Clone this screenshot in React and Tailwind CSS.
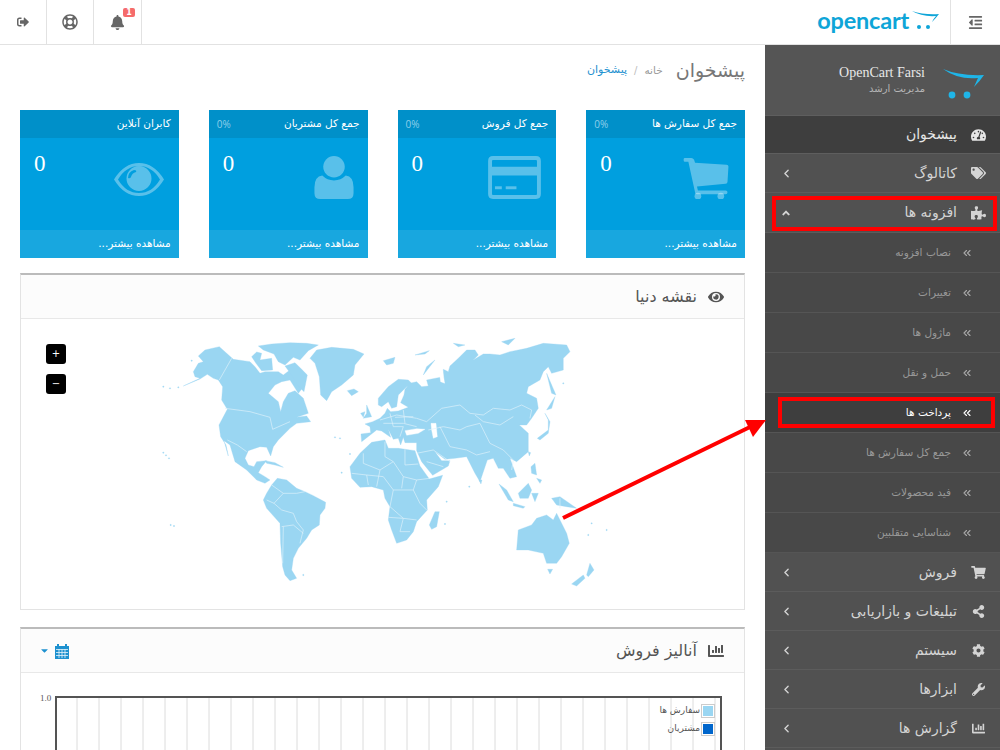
import {
  FaAngleUp,
  FaBell,
  FaCaretDown,
  FaChartBar,
  FaCog,
  FaEye,
  FaOutdent,
  FaPuzzlePiece,
  FaRegLifeRing,
  FaShareAlt,
  FaShoppingCart,
  FaSignOutAlt,
  FaTachometerAlt,
  FaTags,
  FaWrench,
} from "react-icons/fa";
import { ChevronLeft, ChevronsLeft } from "lucide-react";

const subItems = [
  "نصاب افزونه",
  "تغییرات",
  "ماژول ها",
  "حمل و نقل",
  "پرداخت ها",
  "جمع کل سفارش ها",
  "فید محصولات",
  "شناسایی متقلبین",
];

const bottomItems = [
  { label: "فروش", Icon: FaShoppingCart },
  { label: "تبلیغات و بازاریابی", Icon: FaShareAlt },
  { label: "سیستم", Icon: FaCog },
  { label: "ابزارها", Icon: FaWrench },
  { label: "گزارش ها", Icon: FaChartBar },
];

const CartGlyph = () => (
  <svg viewBox="0 0 48 44" className="w-[47px] h-[42px] fill-white/35">
    <path d="M1 1h7q2 0 3 2l1 3 33 2q2 0 2 2l-1 16q0 2-2 2l-30 3 1 4h29q2 0 2 2t-2 2H14q-2 0-2-2L5 5H1q-1 0-1-2t1-2z" />
    <circle cx="15" cy="41" r="3.500" />
    <circle cx="39" cy="41" r="3.500" />
  </svg>
);

const CardGlyph = () => (
  <svg viewBox="0 0 54 44" className="w-[53px] h-[43px] fill-white/35">
    <path
      fillRule="evenodd"
      d="M5 0h44q5 0 5 5v34q0 5-5 5H5q-5 0-5-5V5q0-5 5-5zM4 5v6h46V5q0-1-1-1H5q-1 0-1 1zm0 15v19q0 1 1 1h44q1 0 1-1V20z"
    />
    <rect x="7" y="31" width="7" height="3" />
    <rect x="18" y="31" width="11" height="3" />
  </svg>
);

const UserGlyph = () => (
  <svg viewBox="0 0 40 44" className="w-[40px] h-[43px] fill-white/35">
    <circle cx="20" cy="11" r="11" />
    <path d="M8 20q5 5 12 5t12-5q8 1 8 12v6q0 6-6 6H6q-6 0-6-6v-6q0-11 8-12z" />
  </svg>
);

const EyeGlyph = () => (
  <svg viewBox="0 0 50 33" className="w-[50px] h-[33px] fill-white/35">
    <path
      fillRule="evenodd"
      d="M25 0q15 0 25 16.500Q40 33 25 33T0 16.500Q10 0 25 0zM25 3Q12 3 4 16.500 12 30 25 30t21-13.500Q38 3 25 3z"
    />
    <path
      fillRule="evenodd"
      d="M25 3a12.500 12.500 0 1 1 0 25 12.500 12.500 0 0 1 0-25zM20 7q-6 2-6 8 2 1 3-1 1-4 5-5 1-2-2-2z"
    />
  </svg>
);

const cards = [
  { title: "جمع کل سفارش ها", pct: "0%", more: "مشاهده بیشتر...", Glyph: CartGlyph, top: "pt-[19px] pr-[15px]" },
  { title: "جمع کل فروش", pct: "0%", more: "مشاهده بیشتر...", Glyph: CardGlyph, top: "pt-[18px] pr-[15px]" },
  { title: "جمع کل مشتریان", pct: "0%", more: "مشاهده بیشتر...", Glyph: UserGlyph, top: "pt-[18px] pr-[14px]" },
  { title: "کابران آنلاین", pct: "", more: "مشاهده بیشتر...", Glyph: EyeGlyph, top: "pt-[25px] pr-[15px]" },
];

const Swoosh = ({ className }) => (
  <svg viewBox="0 0 44 32" className={className}>
    <path d="M1 1q16 7 41 6-4 6-10 12 3-7 4-9-20 2-35-9z" fill="#1fb5e8" />
    <circle cx="10" cy="27" r="3.400" fill="#1fb5e8" />
    <circle cx="25" cy="27" r="3.400" fill="#1fb5e8" />
  </svg>
);

// coastlines traced by eye, units are 1/3 px of the page
const land = [
  "100,168 150,147 172,133 190,145 205,150 218,170 215,210 232,238 215,270 207,285 212,320 228,345 235,378 222,332 240,345 255,395 290,420 320,450 345,460 360,450 345,440 325,428 335,410 350,392 320,395 312,410 295,405 285,385 295,362 330,350 350,352 362,378 370,350 385,330 420,295 440,280 482,275 470,258 440,262 475,250 460,205 435,182 415,190 400,215 392,245 385,215 355,190 375,165 395,155 420,150 445,190 465,165 440,130 420,120 400,135 385,125 345,125 330,130 315,110 300,95 250,88 208,50 165,60 145,78 160,95 145,100 130,125 135,140 150,145",
  "305,80 320,66 335,70 330,90 365,85 368,120 335,122 318,100",
  "325,48 365,42 420,38 470,40 505,45 475,62 450,90 430,82 405,105 385,95 372,72 340,60",
  "405,108 435,98 455,118 472,135 462,185 442,165 425,135",
  "480,85 500,60 545,52 610,58 642,72 615,105 610,135 575,165 545,185 530,212 512,195 508,140 495,100",
  "592,182 612,177 625,185 605,197",
  "700,92 735,82 730,100 710,105",
  "795,75 838,62 825,72",
  "345,392 375,398 400,412 375,405 350,400",
  "382,445 410,450 440,475 465,485 490,497 527,517 525,535 510,555 508,585 485,600 470,625 445,655 430,685 425,720 440,745 420,752 405,735 398,710 392,640 390,580 350,535 340,510 350,490 365,465",
  "600,410 630,370 665,337 705,330 715,355 745,355 795,362 810,408 838,447 878,436 865,470 830,510 832,540 800,575 790,605 770,630 740,640 725,600 715,570 720,530 705,505 700,480 665,470 630,472 605,445",
  "855,545 868,545 860,590 845,598 838,585",
  "685,225 685,205 715,170 745,148 775,150 790,165 770,170 758,182 745,195 740,230 725,235 715,215 695,230",
  // eurasia
  "635,335 633,312 662,308 660,290 645,282 668,275 690,265 705,250 712,235 722,245 745,243 775,232 752,218 762,195 765,178 780,160 800,155 815,170 835,168 830,150 880,140 880,118 895,125 900,108 925,85 950,60 975,60 985,75 970,90 1000,72 1020,72 1050,75 1080,65 1130,55 1180,40 1250,45 1260,65 1240,85 1240,120 1205,130 1195,110 1180,125 1170,150 1135,170 1130,190 1160,205 1165,235 1145,265 1130,285 1108,285 1135,310 1135,365 1100,395 1080,385 1100,440 1080,445 1060,415 1045,415 1030,385 1012,390 990,455 975,430 950,380 915,385 885,388 855,365 875,392 900,392 895,408 848,436 815,395 800,362 800,338 765,338 760,322 752,345 745,325 730,328 715,298 722,322 695,303 680,300",
  "650,225 665,260 640,265 650,250",
  "632,250 645,245 640,262",
  "820,135 855,90 830,110",
  "910,40 945,45 925,50",
  "1055,35 1095,25 1075,45",
  "1190,130 1218,195 1205,190 1195,150",
  "1162,325 1195,300 1195,270 1185,250 1200,275 1195,310 1170,330",
  "1190,240 1215,200 1205,235",
  "1100,660 1105,600 1145,585 1160,565 1190,555 1210,570 1220,550 1235,580 1250,610 1258,640 1235,680 1220,700 1190,700 1180,670 1135,660",
  "1193,718 1208,718 1200,732",
  "1310,735 1320,700 1332,720 1315,740",
  "1265,762 1300,735 1305,745 1280,768",
  "1205,505 1230,500 1280,535 1250,530 1220,525",
  "1105,490 1135,460 1145,480 1135,505 1110,505",
  "1047,462 1070,480 1090,515 1075,510",
  "1090,520 1125,530 1120,535 1090,527",
  "1145,490 1165,490 1155,515",
  "1143,410 1155,400 1160,435 1145,430",
  "1160,445 1175,450 1170,460",
  "987,450 996,450 993,462",
  "1135,365 1142,368 1138,378",
];

const water = [
  "765,302 800,296 825,298 805,310 770,316",
  "843,280 858,280 862,320 850,325 845,300",
  "868,125 878,122 884,160 872,155",
];

const islets = [
  [40, 170], [60, 175], [85, 172], [40, 368], [48, 376], [57, 385], [62, 585], [72, 588],
  [125, 92], [555, 322], [570, 325], [575, 428], [600, 372], [890, 515], [885, 582],
  [460, 735], [958, 470], [1325, 580], [1315, 615], [1370, 600], [1240, 160],
];

const borders = [
  "208,150 245,85",
  "225,235 300,245 360,262 368,298 420,275",
  "232,330 262,345 290,365",
  "365,465 400,490 440,490 465,485",
  "400,490 372,520 395,540 430,550 440,575 460,600 450,640",
  "395,590 430,585 460,610",
  "350,510 372,520",
  "400,590 398,700",
  "640,370 640,400 690,420 730,395 705,380 705,335",
  "765,358 765,405 805,402",
  "730,395 760,440 800,450 840,445",
  "605,430 650,435 700,440 730,480 790,480 810,520 830,540",
  "650,435 655,465",
  "690,420 680,470",
  "730,480 720,530 760,565 800,570",
  "715,562 760,565 750,605 780,605",
  "760,440 755,475",
  "800,450 790,480",
  "690,270 740,255 800,265 830,275 875,235 930,225 960,250 1000,255 1030,235 1080,240 1115,225 1145,240 1140,265",
  "975,255 1000,275 1050,285 1090,260",
  "700,280 760,280 800,290",
  "720,250 730,290 760,290 750,320",
  "760,240 765,280",
  "735,262 790,260",
  "835,300 880,290 930,300 950,290 990,280 1020,340 1060,360 1090,390 1085,420",
  "870,290 900,350 950,360 980,375 1020,365",
  "800,370 850,360 900,395",
  "830,395 880,410",
  "1230,505 1230,535",
];

const WorldMap = () => (
  <svg viewBox="150 330 300 260" className="absolute left-[129px] top-[11px] w-[600px] h-[260px]" preserveAspectRatio="xMinYMin meet">
    <g transform="translate(150 330) scale(0.3333)" fill="#9ad6f2" stroke="#9ad6f2" strokeLinejoin="round">
      {land.map((points) => (
        <polygon key={points} points={points} />
      ))}
      {water.map((points) => (
        <polygon key={points} points={points} fill="#fff" stroke="#fff" />
      ))}
      {islets.map(([cx, cy]) => (
        <circle key={`${cx}-${cy}`} cx={cx} cy={cy} r="2" />
      ))}
      <g fill="none" stroke="#dff2fb" strokeWidth="2">
        {borders.map((points) => (
          <polyline key={points} points={points} />
        ))}
      </g>
    </g>
  </svg>
);

const Chart = () => {
  const lines = [];
  for (let i = 1; i < 31; i++) lines.push(i * 22);
  return (
    <div className="relative mt-[23px] ml-[34px] mr-[22px] h-[40px]" dir="ltr">
      <span className="absolute left-[-15px] top-[-4px] text-[9px] text-[#545454] font-['Liberation_Serif',serif]">1.0</span>
      <svg className="w-[668px] h-[60px]" viewBox="0 0 668 60">
        {lines.map((x) => (
          <line key={x} x1={x} x2={x} y1="0" y2="60" stroke="#dcdcdc" />
        ))}
        <path d="M1 60V1H666V60" fill="none" stroke="#545454" strokeWidth="2" />
      </svg>
      <div className="absolute right-[7px] top-[8px] flex flex-col gap-[4px] text-[9px] text-[#545454]">
        <div className="flex items-center justify-end gap-[1px]">
          <span dir="rtl">سفارش ها</span>
          <span className="w-[14px] h-[14px] border border-[#ccc] p-[1px]"><span className="block w-full h-full bg-[#9ad6f2]" /></span>
        </div>
        <div className="flex items-center justify-end gap-[1px]">
          <span dir="rtl">مشتریان</span>
          <span className="w-[14px] h-[14px] border border-[#ccc] p-[1px]"><span className="block w-full h-full bg-[#0066cc]" /></span>
        </div>
      </div>
    </div>
  );
};

const StatCard = ({ title, pct, more, Glyph, top }) => (
  <div className="h-[148px] flex flex-col bg-[#009fdf] text-white">
    <div className="h-[28px] bg-[#0090c9] flex items-center justify-between px-[8px] text-[10.5px]">
      <span>{title}</span>
      <span className="text-[#8fcfe9] text-[10px] font-['Open_Sans',sans-serif]">{pct}</span>
    </div>
    <div className="flex-1 flex items-start justify-between">
      <div className={top}><Glyph /></div>
      <span className="mt-[12px] ml-[14px] text-[23px] leading-[28px] font-['Liberation_Serif',serif]">0</span>
    </div>
    <div className="h-[28px] bg-[#18a7df] flex items-center px-[8px] text-[10.5px]">{more}</div>
  </div>
);

const Panel = ({ icon, title, extra, bodyClass, children }) => (
  <div className="border border-[#e3e3e3] border-t-2 border-t-[#bbb]">
    <div className="h-[44px] bg-[#fcfcfc] border-b border-[#e8e8e8] flex items-center px-[20px] text-[#555]">
      <span className="text-[16px] ml-[11px]">{icon}</span>
      <span className="text-[16px]">{title}</span>
      {extra}
    </div>
    <div className={bodyClass}>{children}</div>
  </div>
);

export default function App() {
  return (
    <div dir="rtl" className="relative w-[1000px] h-[750px] overflow-hidden bg-white font-['DejaVu_Sans',sans-serif]">
      <header className="h-[45px] border-b border-[#e2e2e2] flex">
        <div className="w-[50px] border-l border-[#e2e2e2] flex items-center justify-center text-[#666] text-[15px]"><FaOutdent /></div>
        <div dir="ltr" className="flex items-start ml-auto mr-[10px] gap-[3px]">
          <span className="text-[23.5px] leading-[41px] font-bold tracking-[-0.2px] text-[#0ea5d8] font-['Lato',sans-serif]">opencart</span>
          <svg viewBox="0 0 28 20" className="w-[28px] h-[20px] mt-[11px]">
            <path d="M0 0q12 4 27 3-3 4-7 8 2-4 4-6-14 1-24-5z" fill="#0ea5d8" />
            <circle cx="7" cy="16" r="2" fill="#0ea5d8" />
            <circle cx="16" cy="16" r="2" fill="#0ea5d8" />
          </svg>
        </div>
        <div className="w-[49px] border-x border-[#e2e2e2] flex items-center justify-center text-[#666] text-[15px] relative">
          <FaBell />
          <span className="absolute left-[29px] top-[8px] h-[9px] w-[12px] rounded-[2px] bg-[#f56b6b] text-white text-[8px] leading-[9px] text-center font-bold">1</span>
        </div>
        <div className="w-[47px] border-l border-[#e2e2e2] flex items-center justify-center text-[#666] text-[16px]"><FaRegLifeRing /></div>
        <div className="w-[46px] flex items-center justify-center text-[#666] text-[12px]"><FaSignOutAlt /></div>
      </header>

      <div className="flex h-[705px]">
        <aside className="w-[235px] shrink-0 bg-[#515151] text-[#d4d4d4]">
          <div className="h-[71px] flex items-start bg-[#555] border-b border-[#5e5e5e]">
            <Swoosh className="w-[44px] h-[32px] mr-[14px] mt-[23px]" />
            <div className="mr-[17px] mt-[19px]">
              <div dir="ltr" className="text-[14px] leading-[18px] text-[#e8e8e8] font-['Liberation_Serif',serif]">OpenCart Farsi</div>
              <div className="text-[10px] leading-[14px] text-[#b5b5b5]">مدیریت ارشد</div>
            </div>
          </div>
          <div className="h-[38px] bg-[#3e3e3e] border-b border-[#5e5e5e] flex items-center pr-[14px] text-[#e6e6e6]">
            <FaTachometerAlt className="text-[14px] w-[15px]" />
            <span className="mr-[14px] text-[14px]">پیشخوان</span>
          </div>
          <div className="h-[39px] border-b border-[#5c5c5c] flex items-center pr-[14px] pl-[15px]">
            <FaTags className="text-[14px] w-[15px]" />
            <span className="mr-[14px] text-[14px]">کاتالوگ</span>
            <ChevronLeft size={13} strokeWidth={2.5} className="mr-auto" />
          </div>
          <div className="h-[40px] border-b border-[#5c5c5c] flex items-center pr-[14px] pl-[15px]">
            <FaPuzzlePiece className="text-[14px] w-[15px]" />
            <span className="mr-[14px] text-[14px]">افزونه ها</span>
            <FaAngleUp className="mr-auto text-[12px]" />
          </div>
          <div className="bg-[#484848]">
            {subItems.map((label, i) => (
              <div
                key={label}
                className={`h-[40px] border-b border-[#555] flex items-center pr-[27px] ${i === 4 ? "bg-[#3e3e3e] text-white" : "text-[#a8a8a8]"}`}
              >
                <ChevronsLeft size={12} strokeWidth={2.25} />
                <span className={`mr-[10px] text-[10.5px] ${i === 4 ? "" : "text-[#989898]"}`}>{label}</span>
              </div>
            ))}
          </div>
          {bottomItems.map(({ label, Icon }) => (
            <div key={label} className="h-[39px] border-b border-[#5c5c5c] flex items-center pr-[14px] pl-[15px]">
              <Icon className="text-[13px] w-[15px]" />
              <span className="mr-[14px] text-[14px]">{label}</span>
              <ChevronLeft size={13} strokeWidth={2.5} className="mr-auto" />
            </div>
          ))}
        </aside>

        <main className="flex-1 px-[20px] overflow-hidden">
          <div className="h-[65px] flex items-center pb-[14px]">
            <h1 className="text-[19px] text-[#777]">پیشخوان</h1>
            <span className="mr-[13px] text-[10.5px] text-[#999]">خانه</span>
            <span className="mx-[7px] text-[10px] text-[#bbb]">/</span>
            <span className="text-[11px] text-[#1e91cf]">پیشخوان</span>
          </div>

          <div className="grid grid-cols-4 gap-[30px] mb-[15px]">
            {cards.map((c) => (
              <StatCard key={c.title} {...c} />
            ))}
          </div>

          <div className="mb-[17px]">
            <Panel icon={<FaEye />} title="نقشه دنیا" bodyClass="relative h-[290px]">
              <div dir="ltr" className="absolute inset-0">
                <WorldMap />
                <div className="absolute left-[25px] top-[25px] w-[20px] h-[20px] rounded-[3px] bg-black text-white text-[10px] leading-[20px] text-center">+</div>
                <div className="absolute left-[25px] top-[55px] w-[20px] h-[20px] rounded-[3px] bg-black text-white text-[10px] leading-[20px] text-center">−</div>
              </div>
            </Panel>
          </div>

          <Panel
            icon={<FaChartBar />}
            title="آنالیز فروش"
            extra={
              <span className="mr-auto flex items-center text-[#1e91cf]">
                <svg viewBox="0 0 16 16" className="w-[16px] h-[16px]">
                  <path fill="#1e91cf" d="M1 3h2V1h2v2h6V1h2v2h2v13H1z" />
                  <path stroke="#e4f3fb" strokeWidth="0.8" d="M2 6.500h12M2 9.500h12M2 12.500h12M5 6v9M8 6v9M11 6v9" />
                </svg>
                <FaCaretDown className="text-[11px] mr-[4px] -ml-[2px]" />
              </span>
            }
            bodyClass="h-[100px]"
          >
            <Chart />
          </Panel>
        </main>
      </div>

      {/* annotations on top of the screenshot */}
      <div className="absolute left-[772px] top-[196px] w-[225px] h-[35px] border-4 border-[#f00]" />
      <div className="absolute left-[778px] top-[397px] w-[217px] h-[31px] border-4 border-[#f00]" />
      <svg className="absolute left-0 top-0 w-[1000px] h-[750px] pointer-events-none" viewBox="0 0 1000 750">
        <path d="M563 518L750 427" stroke="#f00" strokeWidth="4" />
        <path d="M766 420L745 420L753 437z" fill="#f00" />
      </svg>
    </div>
  );
}
